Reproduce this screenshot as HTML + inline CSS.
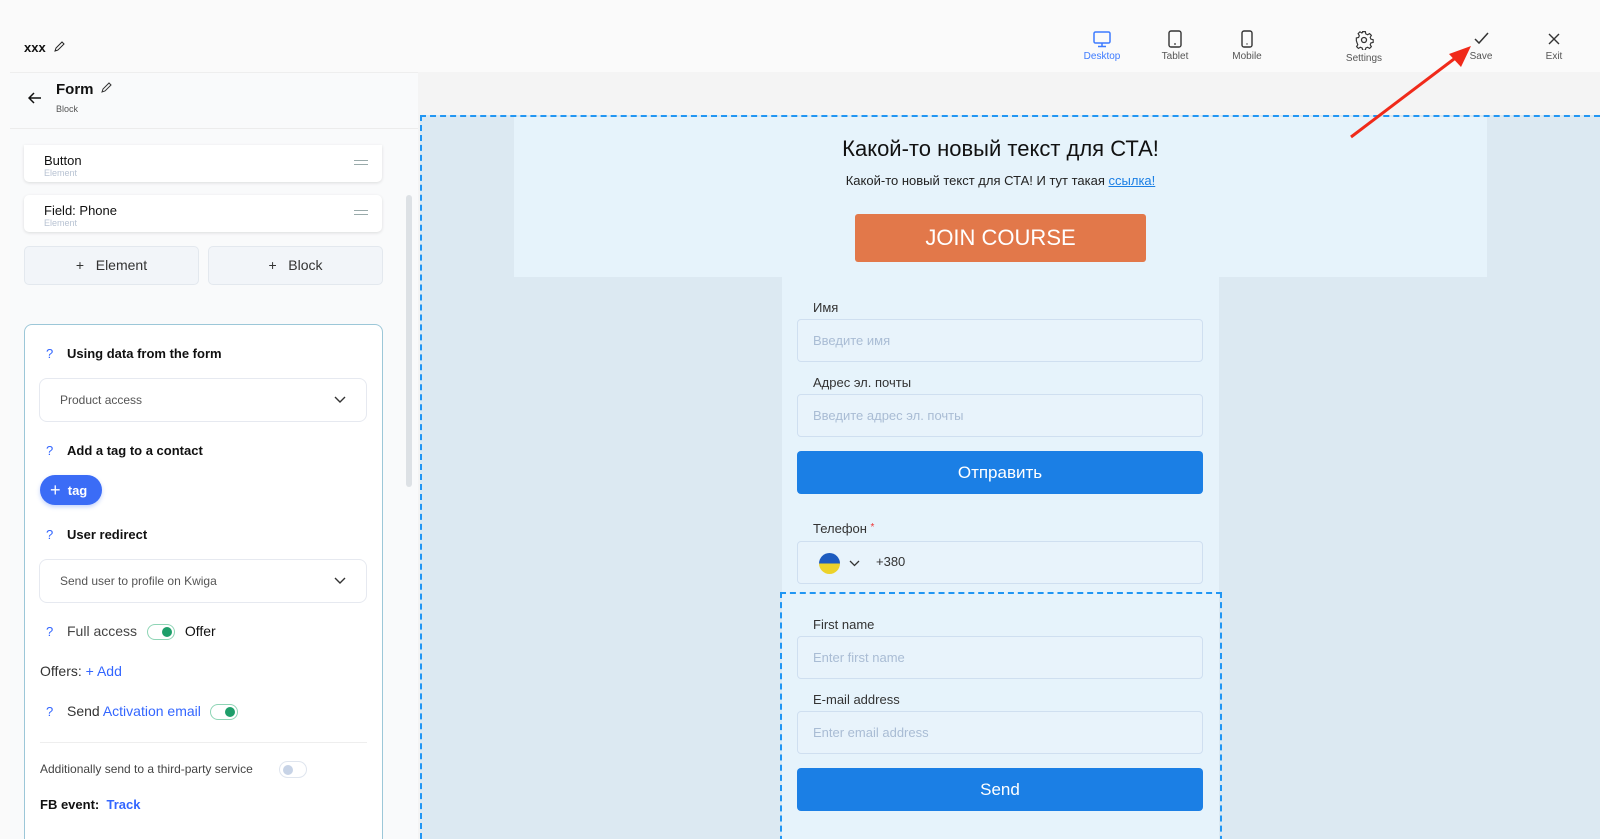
<!DOCTYPE html>
<html style="width:1600px;height:839px;overflow:hidden"><head><meta charset="utf-8"><style>
*{box-sizing:border-box;margin:0;padding:0}
html,body{overflow:hidden}
body{width:1600px;height:839px;overflow:hidden;background:#fafafa;font-family:"Liberation Sans","Noto Sans CJK SC",sans-serif;color:#111;position:relative}
.abs{position:absolute}
.tb{position:absolute;top:30px;text-align:center;font-size:10px;color:#555;width:60px}
.tb svg{display:block;margin:0 auto 3px}
.card{position:absolute;left:24px;width:358px;background:#fff;border-radius:5px;box-shadow:0 1px 3px rgba(0,0,0,.12);padding:8px 20px}
.card b{font-weight:normal;font-size:13px;display:block}
.card i{font-style:normal;font-size:9px;color:#b8c3d3;display:block}
.card .h{position:absolute;right:14px;top:15px;width:14px;height:5px;border-top:1.5px solid #9aa;border-bottom:1.5px solid #9aa}
.btn2{position:absolute;top:246px;height:39px;width:175px;background:#f2f5f9;border:1px solid #e3e8ee;border-radius:5px;font-size:14px;color:#333;text-align:center;line-height:37px}
.q{color:#3366ff;font-size:13px;position:absolute;left:46px}
.lbl{position:absolute;left:67px;font-size:13px;font-weight:bold;color:#111}
.sel{position:absolute;left:39px;width:328px;height:44px;border:1px solid #e6e9f0;border-radius:8px;font-size:12px;color:#555;padding:14px 20px;background:#fff}
.sel svg{position:absolute;right:20px;top:17px}
.tog{display:inline-block;width:28px;height:16px;border:1.5px solid #8fd5b6;border-radius:9px;position:relative;vertical-align:middle;background:#fff}
.tog:after{content:"";position:absolute;right:2px;top:2px;width:10px;height:10px;border-radius:50%;background:#1e9e6a}
.fl{position:absolute;left:813px;font-size:13px;color:#333}
.in{position:absolute;left:797px;width:406px;height:43px;border:1px solid #cfdff0;border-radius:4px;background:#e8f3fb;font-size:13px;color:#a9bcd4;padding:13px 15px}
.bb{position:absolute;left:797px;width:406px;height:43px;border-radius:4px;background:#1b7fe5;color:#fff;font-size:17px;text-align:center;line-height:43px}
</style></head><body>
<div class="abs" style="left:24px;top:40px;font-size:13px;font-weight:bold">xxx</div>
<svg class="abs" style="left:53px;top:41px" width="12" height="12" viewBox="0 0 12 12"><path d="M2 10l1-3 6-6 2 2-6 6z M2 10l3-1" fill="none" stroke="#222" stroke-width="1"/></svg>
<div class="tb" style="left:1072px;color:#3d7bff"><svg width="20" height="18" viewBox="0 0 20 18"><rect x="2" y="2" width="16" height="11" rx="1.5" fill="none" stroke="#3d7bff" stroke-width="1.5"/><path d="M10 13v3M6 16.5h8" stroke="#3d7bff" stroke-width="1.5"/></svg>Desktop</div>
<div class="tb" style="left:1145px"><svg width="20" height="18" viewBox="0 0 20 18"><rect x="4" y="1" width="12" height="16" rx="2" fill="none" stroke="#333" stroke-width="1.4"/><path d="M9 14h2" stroke="#333" stroke-width="1.2"/></svg>Tablet</div>
<div class="tb" style="left:1217px"><svg width="20" height="18" viewBox="0 0 20 18"><rect x="5" y="1" width="10" height="16" rx="2" fill="none" stroke="#333" stroke-width="1.4"/><circle cx="10" cy="14" r=".7" fill="#333"/></svg>Mobile</div>
<div class="tb" style="left:1334px"><svg width="20" height="20" viewBox="0 0 20 20"><circle cx="10" cy="10" r="2.5" fill="none" stroke="#333" stroke-width="1.3"/><path d="M8.5 1.5h3l.5 2.5 2 1 2.2-1.3 2 2-1.3 2.2.8 2 2.5.6v3l-2.5.5-.8 2 1.3 2.2-2 2-2.2-1.3-2 .8-.5 2.5h-3l-.5-2.5-2-.8-2.2 1.3-2-2 1.3-2.2-.8-2L1.5 11.5v-3L4 8l.8-2L3.5 3.7l2-2L7.7 3l.8-.9z" transform="scale(.9) translate(1.1 .3)" fill="none" stroke="#333" stroke-width="1.3"/></svg>Settings</div>
<div class="tb" style="left:1451px"><svg width="20" height="18" viewBox="0 0 20 18"><path d="M4 9l4 4 9-10" fill="none" stroke="#333" stroke-width="1.5"/></svg>Save</div>
<div class="tb" style="left:1524px"><svg width="20" height="18" viewBox="0 0 20 18"><path d="M5 4l10 10M15 4L5 14" stroke="#333" stroke-width="1.4"/></svg>Exit</div>
<div class="abs" style="left:10px;top:72px;width:408px;height:767px;background:#f9fafb;border-top:1px solid #eee"></div>
<div class="abs" style="left:10px;top:128px;width:408px;height:1px;background:#ececec"></div>
<svg class="abs" style="left:28px;top:92px" width="14" height="12" viewBox="0 0 14 12"><path d="M13 6H2M6 1L1 6l5 5" fill="none" stroke="#111" stroke-width="1.5"/></svg>
<div class="abs" style="left:56px;top:81px;font-size:15px;font-weight:bold">Form</div>
<svg class="abs" style="left:100px;top:82px" width="12" height="12" viewBox="0 0 12 12"><path d="M2 10l1-3 6-6 2 2-6 6z" fill="none" stroke="#333" stroke-width="1"/></svg>
<div class="abs" style="left:56px;top:104px;font-size:9px;color:#555">Block</div>
<div class="card" style="top:145px;height:37px;border-radius:0 0 5px 5px"><b>Button</b><i>Element</i><div class="h"></div></div>
<div class="card" style="top:195px;height:37px"><b>Field: Phone</b><i>Element</i><div class="h"></div></div>
<div class="btn2" style="left:24px">+&nbsp;&nbsp; Element</div>
<div class="btn2" style="left:208px">+&nbsp;&nbsp; Block</div>
<div class="abs" style="left:406px;top:195px;width:6px;height:292px;background:#dde1e5;border-radius:3px"></div>
<div class="abs" style="left:24px;top:324px;width:359px;height:515px;background:#fff;border:1px solid #9cc7d8;border-bottom:none;border-radius:8px 8px 0 0"></div>
<div class="q" style="top:346px">?</div><div class="lbl" style="top:346px">Using data from the form</div>
<div class="sel" style="top:378px">Product access<svg width="12" height="8" viewBox="0 0 12 8"><path d="M1 1l5 5 5-5" fill="none" stroke="#333" stroke-width="1.4"/></svg></div>
<div class="q" style="top:443px">?</div><div class="lbl" style="top:443px">Add a tag to a contact</div>
<div class="abs" style="left:40px;top:475px;width:62px;height:30px;border-radius:15px;background:#3b6cf6;color:#fff;font-size:13px;font-weight:bold;line-height:30px;padding-left:10px;box-shadow:0 2px 4px rgba(59,108,246,.3)"><span style="font-size:18px;font-weight:normal;vertical-align:-1px">+</span>&nbsp; tag</div>
<div class="q" style="top:527px">?</div><div class="lbl" style="top:527px">User redirect</div>
<div class="sel" style="top:559px">Send user to profile on Kwiga<svg width="12" height="8" viewBox="0 0 12 8"><path d="M1 1l5 5 5-5" fill="none" stroke="#333" stroke-width="1.4"/></svg></div>
<div class="q" style="top:624px">?</div><div class="abs" style="left:67px;top:623px;font-size:14px;color:#444">Full access <span class="tog" style="margin:0 6px 0 6px"></span> <span style="color:#111">Offer</span></div>
<div class="abs" style="left:40px;top:663px;font-size:14px;color:#333">Offers: <span style="color:#3366ff">+ Add</span></div>
<div class="q" style="top:704px">?</div><div class="abs" style="left:67px;top:703px;font-size:14px;color:#333">Send <span style="color:#3366ff">Activation email</span> <span class="tog" style="margin-left:5px"></span></div>
<div class="abs" style="left:40px;top:742px;width:327px;height:1px;background:#eee"></div>
<div class="abs" style="left:40px;top:762px;font-size:12px;color:#444">Additionally send to a third-party service</div>
<div class="abs" style="left:279px;top:761px;width:28px;height:17px;border:1px solid #dfe5ee;border-radius:9px;background:#fff"><div style="position:absolute;left:3px;top:3px;width:10px;height:10px;border-radius:50%;background:#c7d3e6"></div></div>
<div class="abs" style="left:40px;top:797px;font-size:13px;font-weight:bold">FB event: &nbsp;<span style="color:#3366ff">Track</span></div>
<div class="abs" style="left:418px;top:72px;width:1182px;height:767px;background:#f4f4f4"></div>
<div class="abs" style="left:420px;top:115px;width:1180px;height:724px;background:#dce9f2;border-top:2px dashed #2196f3;border-left:2px dashed #2196f3"></div>
<div class="abs" style="left:514px;top:117px;width:973px;height:160px;background:#e6f3fb"></div>
<div class="abs" style="left:782px;top:277px;width:437px;height:562px;background:#e6f3fb"></div>
<div class="abs" style="left:514px;top:136px;width:973px;text-align:center;font-size:22px;color:#111">Какой-то новый текст для СТА!</div>
<div class="abs" style="left:514px;top:173px;width:973px;text-align:center;font-size:13px;color:#222">Какой-то новый текст для СТА! И тут такая <span style="color:#1b7fe5;text-decoration:underline">ссылка!</span></div>
<div class="abs" style="left:855px;top:214px;width:291px;height:48px;background:#e2784a;border-radius:3px;color:#fff;font-size:22px;text-align:center;line-height:48px">JOIN COURSE</div>
<div class="fl" style="top:300px">Имя</div>
<div class="in" style="top:319px">Введите имя</div>
<div class="fl" style="top:375px">Адрес эл. почты</div>
<div class="in" style="top:394px">Введите адрес эл. почты</div>
<div class="bb" style="top:451px">Отправить</div>
<div class="fl" style="top:521px">Телефон <span style="color:#e33;font-size:10px;vertical-align:3px">*</span></div>
<div class="in" style="top:541px;color:#333"><span style="position:absolute;left:21px;top:11px;width:21px;height:21px;border-radius:50%;background:linear-gradient(#1d5bbf 50%,#ecd22a 50%)"></span><svg style="position:absolute;left:51px;top:18px" width="11" height="7" viewBox="0 0 11 7"><path d="M1 1l4.5 4.5L10 1" fill="none" stroke="#333" stroke-width="1.3"/></svg><span style="position:absolute;left:78px;top:12px">+380</span></div>
<div class="abs" style="left:780px;top:592px;width:442px;height:260px;border:2px dashed #2196f3"></div>
<div class="fl" style="top:617px">First name</div>
<div class="in" style="top:636px">Enter first name</div>
<div class="fl" style="top:692px">E-mail address</div>
<div class="in" style="top:711px">Enter email address</div>
<div class="bb" style="top:768px">Send</div>
<svg class="abs" style="left:0;top:0" width="1600" height="839"><line x1="1351" y1="137" x2="1458" y2="56" stroke="#f02a1a" stroke-width="3"/><polygon points="1471,46 1449,54 1461,67" fill="#f02a1a"/></svg>
</body></html>
